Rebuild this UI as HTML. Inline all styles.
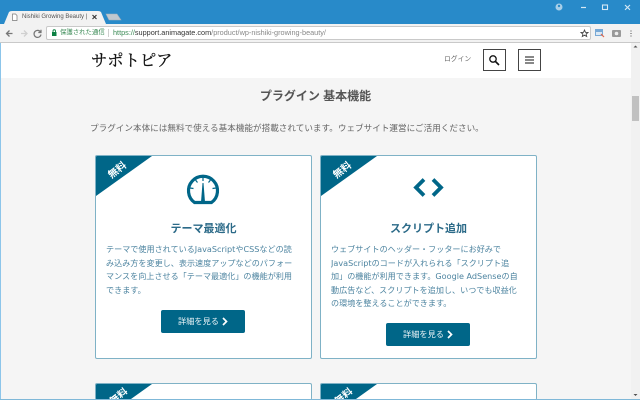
<!DOCTYPE html>
<html><head><meta charset="utf-8"><style>
*{box-sizing:border-box}
html,body{margin:0;padding:0;width:640px;height:400px;overflow:hidden;background:#f5f5f5;font-family:"Liberation Sans","Noto Sans CJK JP",sans-serif}
#w{position:relative;width:640px;height:400px;overflow:hidden;background:#f5f5f5}
.a{position:absolute;white-space:nowrap}
.card{position:absolute;width:217px;background:#fff;border:1px solid #7fb2c6;border-radius:2px;overflow:hidden}
.tri{position:absolute;left:0;top:0;width:0;height:0;border-top:40px solid #006688;border-right:56px solid transparent}
.free{position:absolute;left:7px;top:8px;width:30px;text-align:center;color:#fff;font-size:10px;font-weight:bold;line-height:14px;transform:rotate(-38deg)}
.t{color:#2b6a88;font-size:11px;line-height:14px;font-weight:bold;text-align:center;position:absolute;left:0;right:0;top:66px}
.p{position:absolute;left:10px;top:87px;width:200px;height:72px;overflow:hidden;font-family:"DejaVu Sans","Noto Sans CJK JP",sans-serif;font-size:8.100px;line-height:13.600px;color:#4d84a0;white-space:nowrap}
.b{position:absolute;width:84px;height:23px;background:#006688;border-radius:2px;color:#e8f2f6;font-size:8.200px;line-height:23px;padding-left:17px}
.b svg{position:absolute;left:60px;top:7px}
</style></head><body><div id="w">
<div class="a" style="left:0;top:0;width:640px;height:24px;background:#288ac9"></div>
<svg class="a" style="left:0;top:0" width="640" height="44">
<path d="M4 24 L9 12 Q10 11 12 11 L98 11 Q100 11 101 12 L106 24Z" fill="#f2f2f2"/>
<path d="M106 14 L117 14 L121 20 L109 20Z" fill="#bfc8cf" stroke="#9fb0bc" stroke-width=".6"/>
<rect x="0" y="24" width="640" height="19" fill="#f2f2f2"/>
<rect x="46.500" y="26.500" width="544" height="13" rx="1.500" fill="#fff" stroke="#c9c9c9"/>
<rect x="0" y="42" width="640" height="1" fill="#c9c9c9"/>
<path d="M12.500 20.500V14H15.500L17 15.500V20.500Z" fill="#fff" stroke="#777" stroke-width=".7"/>
<path d="M92.500 15L96.500 19M96.500 15L92.500 19" stroke="#333" stroke-width="1.100"/>
<path d="M12.500 33.500H6.500M9.500 30.500L6.500 33.500L9.500 36.500" fill="none" stroke="#777" stroke-width="1.300"/>
<path d="M21 33.500H27M24 30.500L27 33.500L24 36.500" fill="none" stroke="#d0d0d0" stroke-width="1.300"/>
<path d="M40.500 32A3.500 3.500 0 1 0 41 34.500M41 29.800V32.500H38.300" fill="none" stroke="#777" stroke-width="1.200"/>
<rect x="52" y="32" width="4.500" height="4" fill="#0b8043"/><path d="M53 32V31A1.200 1.200 0 0 1 55.500 31V32" fill="none" stroke="#0b8043" stroke-width=".9"/>
<path d="M108.500 29V37" stroke="#bbb" stroke-width=".7"/>
<path d="M584.500 30L585.500 32.300L588 32.500L586.100 34.100L586.700 36.500L584.500 35.200L582.300 36.500L582.900 34.100L581 32.500L583.500 32.300Z" fill="none" stroke="#444" stroke-width=".9"/>
<rect x="595.500" y="29.500" width="7" height="6" fill="#dbe9f5" stroke="#78a9d6"/><path d="M596 30H603V32H596Z" fill="#78a9d6"/><path d="M601 34L604 37" stroke="#e2674a" stroke-width="1.200"/>
<rect x="612" y="30" width="9" height="7" rx="1" fill="#999"/><circle cx="616.500" cy="33.500" r="1.800" fill="#eee"/>
<path d="M631 30.500V31.500M631 33V34M631 35.500V36.500" stroke="#666" stroke-width="1.200"/>
<circle cx="559" cy="7" r="3.500" fill="#a9cfe8"/><circle cx="559" cy="6" r="1.200" fill="#288ac9"/>
<path d="M581 7.500H586" stroke="#d5e8f5" stroke-width="1.200"/>
<rect x="602.500" y="5" width="5" height="4.500" fill="none" stroke="#d5e8f5" stroke-width="1.100"/>
<path d="M625 5L630 9.800M630 5L625 9.800" stroke="#d5e8f5" stroke-width="1.100"/>
</svg>
<div class="a" style="left:22px;top:12px;font-size:6px;line-height:10px;color:#555">Nishiki Growing Beauty |</div>
<div class="a" style="left:60px;top:28px;font-size:6.400px;line-height:10px;color:#3a8a55">保護された通信</div>
<div class="a" style="left:113px;top:28px;font-size:7.300px;line-height:10px;color:#888"><span style="color:#3a8a55">https://</span><span style="color:#333">support.animagate.com</span>/product/wp-nishiki-growing-beauty/</div>

<div class="a" style="left:1px;top:43px;width:630px;height:35px;background:#fff"></div>
<div class="a" style="left:0;top:43px;width:1px;height:357px;background:#8cc5ea"></div>
<div class="a" style="left:631px;top:43px;width:9px;height:357px;background:#f1f1f1"></div>
<div class="a" style="left:632px;top:96px;width:7px;height:25px;background:#c1c1c1"></div>
<svg class="a" style="left:631px;top:43px" width="9" height="357"><path d="M2.500 4.500H6.500L4.500 2.500Z M2.500 351H6.500L4.500 353Z" fill="#505050"/></svg>
<div class="a" style="left:91px;top:50px;font-family:'Liberation Serif','Noto Serif CJK SC',serif;font-size:16.300px;line-height:22px;color:#111;-webkit-text-stroke:.3px #111">サポトピア</div>
<div class="a" style="left:444px;top:54px;font-size:6.800px;line-height:11px;color:#666">ログイン</div>
<div class="a" style="left:483px;top:49px;width:23px;height:22px;border:1px solid #444;background:#fff"></div>
<svg class="a" style="left:483px;top:49px" width="23" height="22"><circle cx="10" cy="10" r="3.200" fill="none" stroke="#111" stroke-width="1.300"/><path d="M12.500 12.500L16 16" stroke="#111" stroke-width="1.600"/></svg>
<div class="a" style="left:518px;top:49px;width:23px;height:22px;border:1px solid #444;background:#fff"></div>
<svg class="a" style="left:518px;top:49px" width="23" height="22"><path d="M7 8H16M7 11H16M7 14H16" stroke="#111" stroke-width="1"/></svg>

<div class="a" style="left:0;width:631px;top:88px;text-align:center;font-size:12px;line-height:16px;font-weight:bold;color:#555">プラグイン 基本機能</div>
<div class="a" style="left:90px;top:122px;font-size:8.600px;line-height:12px;color:#666">プラグイン本体には無料で使える基本機能が搭載されています。ウェブサイト運営にご活用ください。</div>

<div class="card" style="left:95px;top:155px;height:204px">
<div class="tri"></div><div class="free">無料</div>
<svg class="a" style="left:90px;top:17px" width="34" height="32"><path d="M8.500 29.500A14.500 14.500 0 1 1 25.500 29.500Z" fill="none" stroke="#006688" stroke-width="3.200"/><path d="M15 29L16.500 10H17.500L19 29Z" fill="#006688"/><path d="M17 4V8M9.500 7L11.500 9.500M24.500 7L22.500 9.500M4 15L7.500 15.500M30 15L26.500 15.500" stroke="#006688" stroke-width="1.200"/></svg>
<div class="t">テーマ最適化</div>
<div class="p">テーマで使用されているJavaScriptやCSSなどの読<br>み込み方を変更し、表示速度アップなどのパフォー<br>マンスを向上させる「テーマ最適化」の機能が利用<br>できます。</div>
<div class="b" style="left:65px;top:154px">詳細を見る<svg width="8" height="9"><path d="M2 1L5.500 4.500L2 8" fill="none" stroke="#fff" stroke-width="1.700"/></svg></div>
</div>

<div class="card" style="left:320px;top:155px;height:204px">
<div class="tri"></div><div class="free">無料</div>
<svg class="a" style="left:90px;top:17px" width="36" height="32"><path d="M13 6.500L5 14.500L13 22.500M22 6.500L30 14.500L22 22.500" fill="none" stroke="#006688" stroke-width="3.800"/></svg>
<div class="t">スクリプト追加</div>
<div class="p">ウェブサイトのヘッダー・フッターにお好みで<br>JavaScriptのコードが入れられる「スクリプト追<br>加」の機能が利用できます。Google AdSenseの自<br>動広告など、スクリプトを追加し、いつでも収益化<br>の環境を整えることができます。</div>
<div class="b" style="left:65px;top:167px">詳細を見る<svg width="8" height="9"><path d="M2 1L5.500 4.500L2 8" fill="none" stroke="#fff" stroke-width="1.700"/></svg></div>
</div>

<div class="card" style="left:95px;top:383px;height:17px;border-bottom:0"><div class="tri"></div><div class="free" style="top:7px;height:9px;overflow:hidden">無料</div></div>
<div class="card" style="left:320px;top:383px;height:17px;border-bottom:0"><div class="tri"></div><div class="free" style="top:7px;height:9px;overflow:hidden">無料</div></div>
<div class="a" style="left:0;top:399px;width:640px;height:1px;background:#7fb8d8"></div>
</div></body></html>
